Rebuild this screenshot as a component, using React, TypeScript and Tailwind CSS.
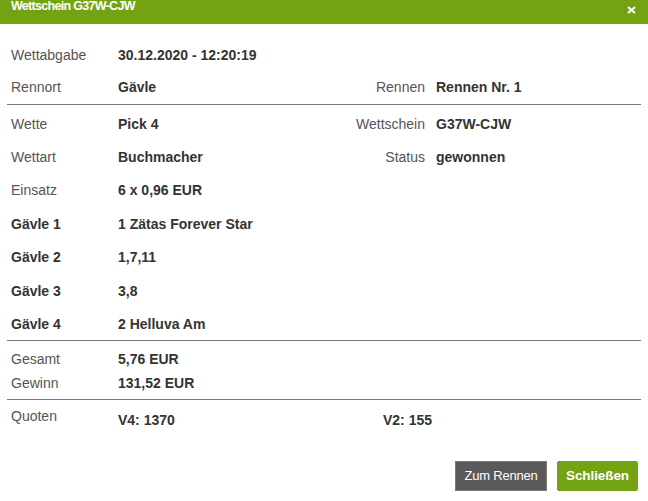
import React from "react";

const font = { fontFamily: '"Liberation Sans", Arial, Helvetica, sans-serif' };

function Row({
  h,
  label,
  value,
  rLabel,
  rValue,
  boldLabel,
}: {
  h: string;
  label: string;
  value: string;
  rLabel?: string;
  rValue?: string;
  boldLabel?: boolean;
}) {
  return (
    <div className={`flex items-center ${h}`}>
      <div
        className={`w-[111px] pl-[4px] ${
          boldLabel ? "font-bold text-[#333333]" : "text-[#555555]"
        }`}
      >
        {label}
      </div>
      <div className="w-[200px] font-bold text-[#333333]">{value}</div>
      {rLabel !== undefined && (
        <>
          <div className="w-[107px] text-right text-[#555555]">{rLabel}</div>
          <div className="ml-[11px] font-bold text-[#333333]">{rValue}</div>
        </>
      )}
    </div>
  );
}

export default function App() {
  return (
    <div className="w-[648px] h-[501px] bg-white text-[14px] leading-[20px]" style={font}>
      <div className="h-[24px] bg-[#73a313] flex items-start justify-between pl-[11px] pr-[12px]">
        <div className="text-white font-bold text-[12.5px] leading-[12px] tracking-[-0.7px]">
          Wettschein G37W-CJW
        </div>
        <svg width="9" height="8" viewBox="0 0 9 8" className="mt-[6px]">
          <path d="M1 1 L8 7 M8 1 L1 7" stroke="white" strokeWidth="2" />
        </svg>
      </div>

      <div className="px-[7px] pt-[15px]">
        <Row h="h-[32px]" label="Wettabgabe" value="30.12.2020 - 12:20:19" />
        <Row h="h-[32px]" label="Rennort" value="Gävle" rLabel="Rennen" rValue="Rennen Nr. 1" />
        <div className="h-px bg-[#777777] mt-px" />
        <div className="pt-[2px]">
          <Row h="h-[33px]" label="Wette" value="Pick 4" rLabel="Wettschein" rValue="G37W-CJW" />
          <Row h="h-[33px]" label="Wettart" value="Buchmacher" rLabel="Status" rValue="gewonnen" />
          <Row h="h-[34px]" label="Einsatz" value="6 x 0,96 EUR" />
          <Row h="h-[33px]" boldLabel label="Gävle 1" value="1 Zätas Forever Star" />
          <Row h="h-[34px]" boldLabel label="Gävle 2" value="1,7,11" />
          <Row h="h-[33px]" boldLabel label="Gävle 3" value="3,8" />
          <Row h="h-[33px]" boldLabel label="Gävle 4" value="2 Helluva Am" />
        </div>
        <div className="h-px bg-[#777777]" />
        <div className="pt-[6px] pb-[4px]">
          <Row h="h-[24px]" label="Gesamt" value="5,76 EUR" />
          <Row h="h-[24px]" label="Gewinn" value="131,52 EUR" />
        </div>
        <div className="h-px bg-[#777777]" />
        <div className="flex items-start pt-[6px] h-[30px]">
          <div className="w-[111px] pl-[4px] text-[#555555]">Quoten</div>
          <div className="w-[265px] pt-[4px] font-bold text-[#333333]">V4: 1370</div>
          <div className="pt-[4px] font-bold text-[#333333]">V2: 155</div>
        </div>
      </div>

      <div className="flex justify-end gap-[10px] pr-[10px] pt-[31px]">
        <button className="w-[92px] h-[30px] bg-[#5a5a5a] border border-[#7a7a7a] text-white text-[13px] tracking-[-0.2px]">
          Zum Rennen
        </button>
        <button className="w-[81px] h-[30px] bg-[#73a313] rounded-[2px] text-white text-[13.5px] font-bold tracking-[-0.1px]">
          Schließen
        </button>
      </div>
    </div>
  );
}
